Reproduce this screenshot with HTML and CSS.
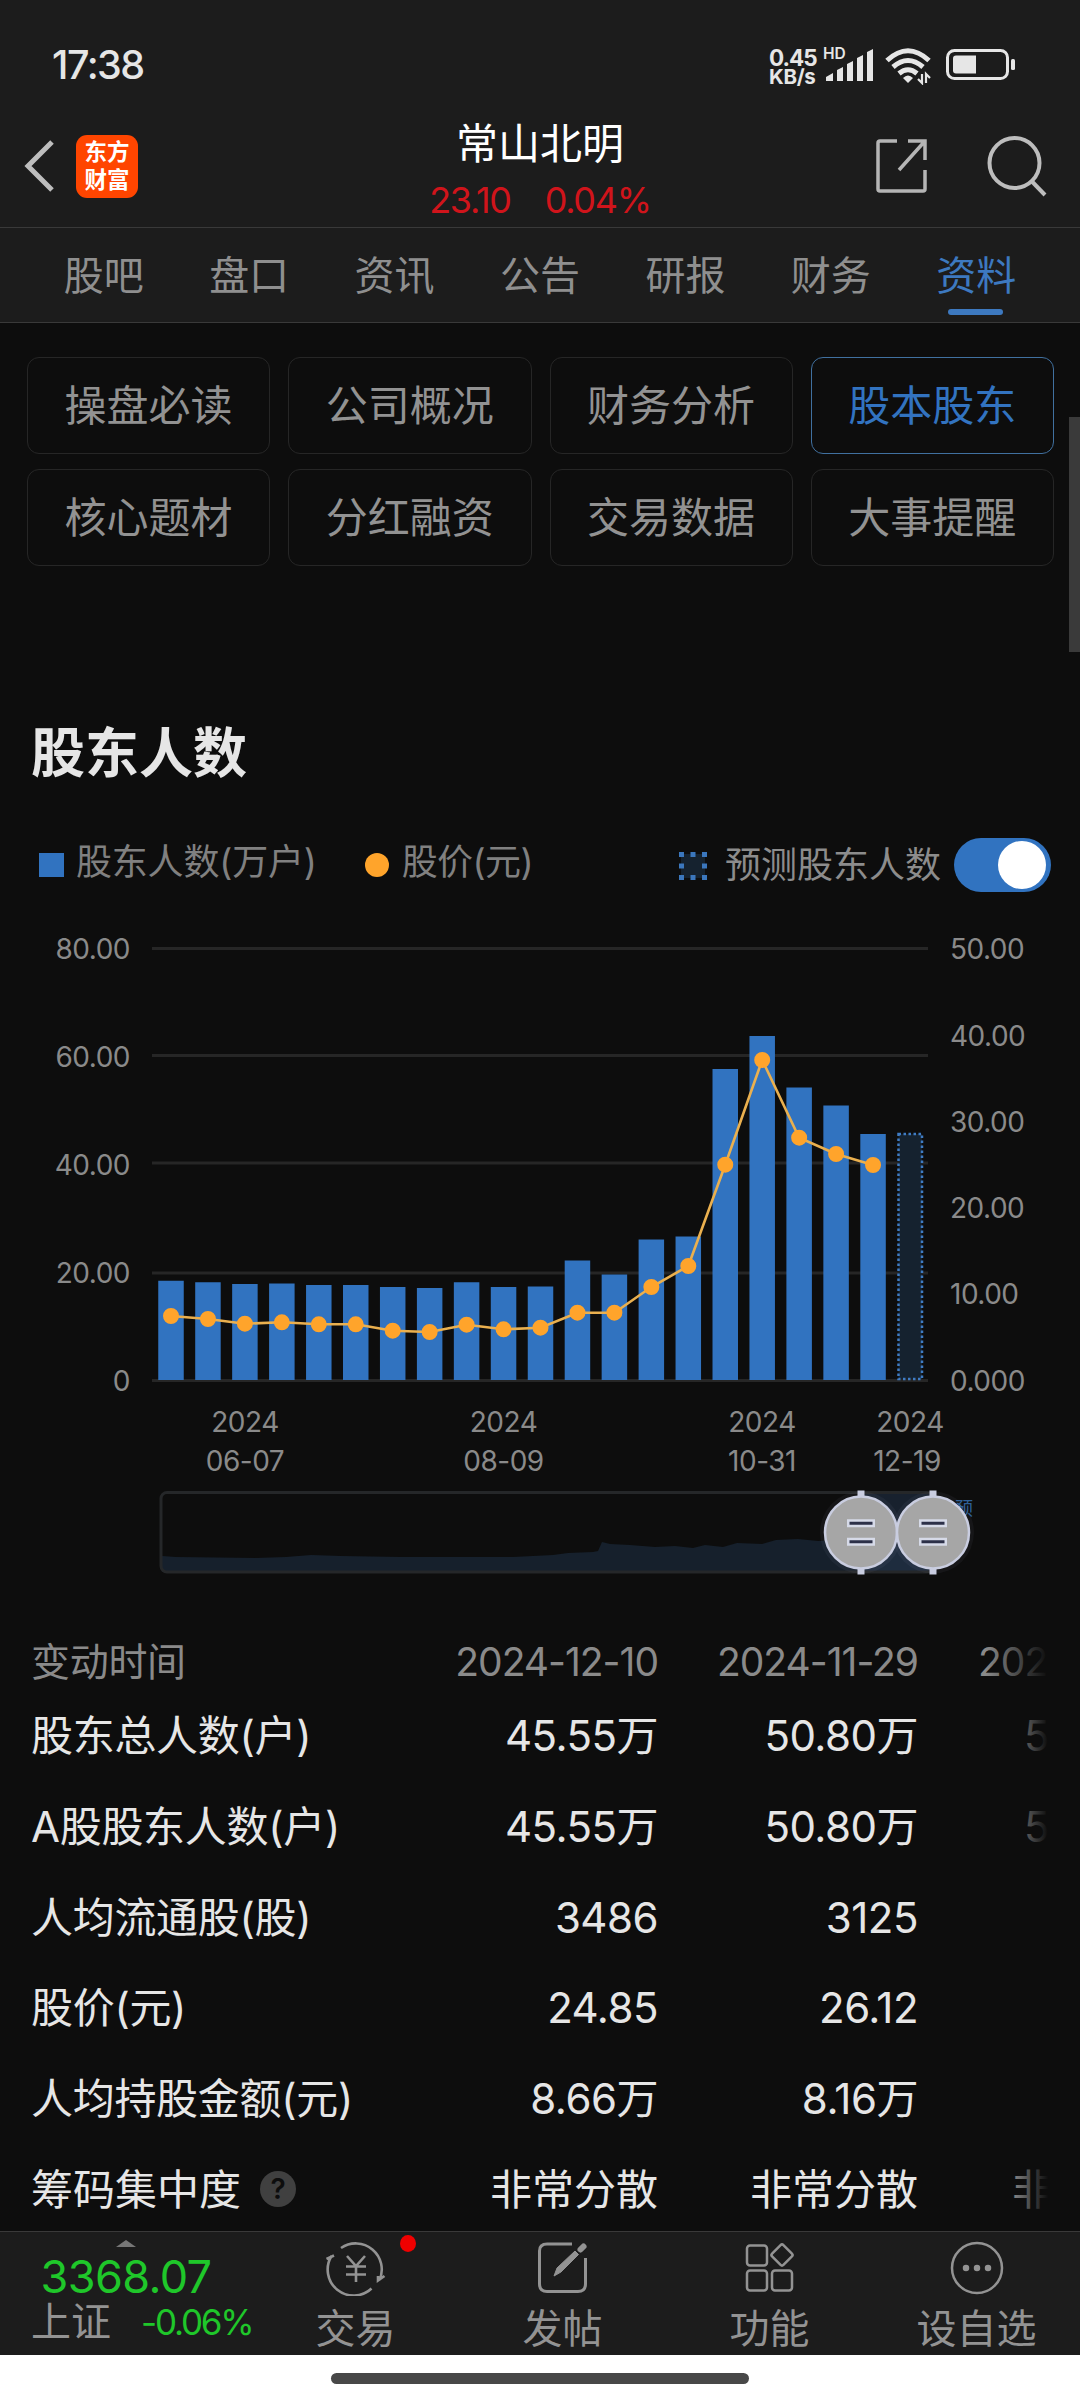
FILE: index.html
```html
<!DOCTYPE html>
<html lang="zh-CN">
<head>
<meta charset="utf-8">
<title>常山北明</title>
<link rel="stylesheet" href="styles.css">
</head>
<body>
<div class="app">
  <div class="status">
    <span class="clock">17:38</span>
    <div class="status-right">
      <div class="speed"><span>0.45</span><span class="unit">KB/s</span></div>
      <svg class="signal" width="54" height="44" viewBox="-2 -4 54 44" fill="#e6e6e6">
        <text x="0" y="14" class="hd">HD</text>
        <path d="M3 36v-4l7-4v8zM14 36V25l6-3v14zM24 36V19l6-3v20zM34 36V13l6-3v26zM44 36V7l6-3v32z"/>
      </svg>
      <svg class="wifi" width="46" height="38" viewBox="0 0 46 38" fill="none" stroke="#e6e6e6" stroke-width="5">
        <path d="M2 13.500Q23-6 44 13.500M8 20Q23 7 38 20M14 26.500Q23 19 32 26.500"/>
        <path d="M23 36l-5-5q5-5 10 0z" fill="#e6e6e6" stroke="none"/>
        <path d="M37 27v9l-4-4M41 36v-9l4 4" stroke-width="2.200"/>
      </svg>
      <svg class="battery" width="69" height="32" viewBox="0 0 69 32">
        <rect x="1.500" y="1.500" width="60" height="28" rx="7" fill="none" stroke="#e6e6e6" stroke-width="3"/>
        <path d="M10 6.500H30V24.500H10Q7 24.500 7 21.500V9.500Q7 6.500 10 6.500z" fill="#e6e6e6"/>
        <rect x="65" y="10" width="4" height="11" rx="1.500" fill="#e6e6e6"/>
      </svg>
    </div>
  </div>

  <header class="header">
    <div class="header-left">
      <svg width="32" height="54" viewBox="0 0 32 54" fill="none" stroke="#bdbdbd" stroke-width="5"><path d="M28 3L4 27l24 24"/></svg>
      <div class="logo"><span>东方</span><span>财富</span></div>
    </div>
    <div class="stock">
      <h1>常山北明</h1>
      <div class="quote"><span>23.10</span><span>0.04%</span></div>
    </div>
    <div class="header-right">
      <svg width="54" height="56" viewBox="0 0 54 56" fill="none" stroke="#b5b5b5" stroke-width="3.500">
        <path d="M22 3H5Q3 3 3 5V51Q3 53 5 53H48Q50 53 50 51V32M33 3H50V22M50 3L24 32"/>
      </svg>
      <svg width="60" height="62" viewBox="0 0 60 62" fill="none" stroke="#bdbdbd" stroke-width="4">
        <circle cx="27.500" cy="28" r="25"/><path d="M44.500 46L58 60"/>
      </svg>
    </div>
  </header>

  <nav class="tabs">
    <span>股吧</span><span>盘口</span><span>资讯</span><span>公告</span><span>研报</span><span>财务</span><span class="active">资料</span>
  </nav>

  <main class="main">
    <div class="scrollbar"></div>
    <div class="chips">
      <span>操盘必读</span><span>公司概况</span><span>财务分析</span><span class="active">股本股东</span>
      <span>核心题材</span><span>分红融资</span><span>交易数据</span><span>大事提醒</span>
    </div>

    <h2>股东人数</h2>

    <div class="legend">
      <i class="square"></i><span class="series">股东人数(万户)</span>
      <i class="dot"></i><span class="series">股价(元)</span>
      <svg class="dotted" width="28" height="28" viewBox="0 0 28 28"><rect x="2" y="2" width="24" height="24" fill="#15222f"/>
        <path d="M0 2.500h28M0 14h28M0 25.500h28" stroke="#3b77bd" stroke-width="5" stroke-dasharray="5 6.500"/>
        <rect x="9" y="9" width="10" height="10" fill="#15222f"/></svg>
      <span class="forecast">预测股东人数</span>
      <span class="toggle"></span>
    </div>

    <svg class="chart" width="1080" height="740" viewBox="0 892 1080 740">
      <path class="grid" d="M152 948.500H928M152 1055.500H928M152 1163H928M152 1273H928M152 1380.500H928"/>
      <g class="axis end">
        <text x="130" y="958.500">80.00</text><text x="130" y="1066.500">60.00</text><text x="130" y="1174.500">40.00</text><text x="130" y="1283">20.00</text><text x="130" y="1391">0</text>
      </g>
      <g class="axis">
        <text x="950" y="958.500">50.00</text><text x="950" y="1045.500">40.00</text><text x="950" y="1131.500">30.00</text><text x="950" y="1218">20.00</text><text x="950" y="1304">10.00</text><text x="950" y="1391">0.000</text>
      </g>
      <path class="bars" d="M171 1380V1280.700M207.950 1380V1282.300M244.900 1380V1284M281.850 1380V1283.500M318.800 1380V1285M355.750 1380V1285M392.700 1380V1287M429.650 1380V1288M466.600 1380V1282.300M503.550 1380V1287M540.500 1380V1286.500M577.450 1380V1260.500M614.400 1380V1274.500M651.350 1380V1239.500M688.300 1380V1236.500M725.250 1380V1069M762.200 1380V1036M799.150 1380V1087.500M836.100 1380V1105.500M873.050 1380V1134"/>
      <rect x="898.500" y="1134" width="23.500" height="245" fill="#15222f" stroke="#3f7cc4" stroke-width="2.500" stroke-dasharray="2.500 2.500"/>
      <polyline class="price" points="171,1316 207.950,1319 244.900,1323.700 281.850,1322.300 318.800,1324.300 355.750,1324.300 392.700,1330.700 429.650,1332 466.600,1324.700 503.550,1329.300 540.500,1327.700 577.450,1312.700 614.400,1312.700 651.350,1287 688.300,1266 725.250,1164.700 762.200,1060 799.150,1137.700 836.100,1154 873.050,1165"/>
      <path class="points" d="M171 1316h0M207.950 1319h0M244.900 1323.700h0M281.850 1322.300h0M318.800 1324.300h0M355.750 1324.300h0M392.700 1330.700h0M429.650 1332h0M466.600 1324.700h0M503.550 1329.300h0M540.500 1327.700h0M577.450 1312.700h0M614.400 1312.700h0M651.350 1287h0M688.300 1266h0M725.250 1164.700h0M762.200 1060h0M799.150 1137.700h0M836.100 1154h0M873.050 1165h0"/>
      <g class="axis mid">
        <text x="245" y="1432">2024</text><text x="245" y="1471">06-07</text>
        <text x="503.500" y="1432">2024</text><text x="503.500" y="1471">08-09</text>
        <text x="762" y="1432">2024</text><text x="762" y="1471">10-31</text>
        <text x="910" y="1432">2024</text><text x="907" y="1471">12-19</text>
      </g>
      <path fill="#16202c" d="M162 1572V1556l14 1 80 1 30-1 25-2 30 1 60 1h112l40-2 15-2 25-1 5-1 4-9 8 2 20 1 25 2 20-1 18 2 12-3 18 2 14-4 25 1 14-4 22-1 20 2 20-1 20-2V1572z"/>
      <rect x="861" y="1493" width="72" height="79" fill="#18212e"/>
      <path d="M861 1545h72v27H861z" fill="#1e2c3e"/>
      <rect x="161" y="1492.500" width="772" height="79.500" rx="6" fill="none" stroke="#252729" stroke-width="3"/>
      <text x="955" y="1515" class="hint">预</text>
      <g class="handle" transform="translate(861 1532.500)"><circle r="41" class="glow"/><path class="stem" d="M0-42V42"/><circle r="36"/><path class="grip" d="M-14-9.300H14M-14 9.300H14"/><path class="groove" d="M-11.500-9.300H11.500M-11.500 9.300H11.500"/></g>
      <g class="handle" transform="translate(933 1532.500)"><circle r="41" class="glow"/><path class="stem" d="M0-42V42"/><circle r="36"/><path class="grip" d="M-14-9.300H14M-14 9.300H14"/><path class="groove" d="M-11.500-9.300H11.500M-11.500 9.300H11.500"/></g>
    </svg>

    <div class="table">
      <div class="row head"><span>变动时间</span><b>2024-12-10</b><b>2024-11-29</b><b class="clip">202</b></div>
      <div class="row"><span>股东总人数(户)</span><b>45.55万</b><b>50.80万</b><b class="clip num">5</b></div>
      <div class="row"><span>A股股东人数(户)</span><b>45.55万</b><b>50.80万</b><b class="clip num">5</b></div>
      <div class="row"><span>人均流通股(股)</span><b>3486</b><b>3125</b></div>
      <div class="row"><span>股价(元)</span><b>24.85</b><b>26.12</b></div>
      <div class="row"><span>人均持股金额(元)</span><b>8.66万</b><b>8.16万</b></div>
      <div class="row"><span class="cjk">筹码集中度<i class="help">?</i></span><b class="cjk">非常分散</b><b class="cjk">非常分散</b><b class="clip word">非</b></div>
    </div>
  </main>

  <footer class="footer">
    <div class="index">
      <svg width="20" height="7" viewBox="0 0 20 7"><path d="M0 7L10 0l10 7z" fill="#777"/></svg>
      <strong>3368.07</strong>
      <div class="index-row"><span>上证</span><em>-0.06%</em></div>
    </div>
    <div class="item">
      <svg width="62" height="56" viewBox="0 0 62 56" fill="none" stroke="#939393" stroke-width="2.600">
        <path d="M16 8A26 26 0 0 1 54.500 40M46.500 48.500A26 26 0 0 1 6.500 16M1.500 19L9 15.500M59.500 36l-6.500 4.500V36"/>
        <path d="M22 16l9 10 9-10M31 26V42M21 26.500H41M21 34.500H41"/>
      </svg>
      <span>交易</span><i class="badge"></i>
    </div>
    <div class="item">
      <svg width="56" height="56" viewBox="0 0 56 56" fill="none" stroke="#939393" stroke-width="3">
        <path d="M37 4H12Q4.500 4 4.500 11V44Q4.500 51.500 12 51.500H43Q50.500 51.500 50.500 44V18"/>
        <path d="M19 36l3-8L40 11l3.500 3.500L26 32z" fill="#939393" stroke-width="1"/><path d="M45.500 9.500L48.500 6.500" stroke-width="6" stroke-linecap="round"/>
      </svg>
      <span>发帖</span>
    </div>
    <div class="item">
      <svg width="56" height="56" viewBox="0 0 56 56" fill="none" stroke="#939393" stroke-width="2.500">
        <rect x="5" y="5.500" width="20" height="20" rx="3"/><rect x="5" y="30.500" width="20" height="20" rx="3"/><rect x="30" y="30.500" width="20" height="20" rx="3"/><rect x="32" y="7" width="16" height="16" rx="2" transform="rotate(45 40 15)"/>
      </svg>
      <span>功能</span>
    </div>
    <div class="item">
      <svg width="56" height="56" viewBox="0 0 56 56" fill="none" stroke="#939393" stroke-width="2.500">
        <circle cx="28" cy="28" r="25"/><path d="M17 28h0M28 28h0M39 28h0" stroke-width="6.500" stroke-linecap="round"/>
      </svg>
      <span>设自选</span>
    </div>
  </footer>
  <div class="home"><i></i></div>
</div>
</body>
</html>
```
FILE: styles.css
```css
* { box-sizing: border-box; }
body {
  margin: 0;
  background: #0d0d0d;
  color: #e6e6e6;
  font-family: Inter, "Noto Sans CJK SC", sans-serif;
}
h1, h2 { margin: 0; }
i, em { font-style: normal; }
svg { display: block; flex: none; }
.app { width: 1080px; height: 2400px; overflow: hidden; display: flex; flex-direction: column; }

.status { height: 100px; background: #1c1c1c; display: flex; justify-content: space-between; padding: 29px 65px 0 52px; flex: none; }
.clock { font-size: 39.500px; line-height: 72px; font-weight: 500; letter-spacing: -1.500px; }
.status-right { display: flex; align-items: flex-start; padding-top: 18px; }
.speed { display: flex; flex-direction: column; font-size: 22.500px; line-height: 19px; font-weight: 700; width: 54px; margin-top: 1px; letter-spacing: -1px; }
.speed .unit { font-size: 20.500px; letter-spacing: -0.3px; }
.hd { font-size: 15.500px; font-weight: 600; }
.signal { margin: -6px 0 0 -2px; }
.wifi { margin: 0 0 0 10px; }
.battery { margin: 2px 0 0 15px; }

.header { height: 128px; background: #1c1c1c; border-bottom: 1px solid #393939; display: flex; justify-content: space-between; flex: none; }
.header-left { display: flex; align-items: center; padding-left: 24px; width: 300px; height: 132px; }
.logo { width: 62px; height: 63px; margin-left: 20px; border-radius: 11px; background: #ff4500; color: #fff; font-weight: 700; font-size: 22.500px; line-height: 28px; display: flex; flex-direction: column; align-items: center; justify-content: center; }
.stock { text-align: center; padding-top: 15px; }
.stock h1 { font-size: 42px; line-height: 58px; font-weight: 400; color: #fff; }
.quote { display: flex; gap: 34px; justify-content: center; font-size: 36px; line-height: 54px; color: #d0141b; }
.quote span { letter-spacing: -1.300px; }
.header-right { width: 300px; display: flex; align-items: center; justify-content: flex-end; gap: 58px; padding-right: 33px; height: 132px; }

.tabs { height: 95px; background: #1c1c1c; border-bottom: 1px solid #393939; display: flex; padding: 0 31px; flex: none; color: #8f8f8f; font-size: 40px; line-height: 96px; text-align: center; }
.tabs span { flex: 1; position: relative; }
.tabs .active { color: #3d79c0; }
.tabs .active::after { content: ""; position: absolute; left: 50%; margin-left: -28px; top: 81px; width: 55px; height: 6px; border-radius: 3px; background: #3d79c0; }

.main { height: 1908px; flex: none; overflow: hidden; position: relative; padding-top: 34px; }
.scrollbar { position: absolute; right: 0; top: 94px; width: 11px; height: 235px; background: #3a3a3a; }
.chips { display: grid; grid-template-columns: repeat(4, 1fr); gap: 15px 18px; padding: 0 26px 0 27px; }
.chips span { height: 97px; border: 1.500px solid #262626; border-radius: 12px; font-size: 42px; line-height: 96px; text-align: center; color: #929292; }
.chips .active { color: #3273c0; border-color: #40709f; }
h2 { margin: 152px 0 48px 31px; font-size: 54px; line-height: 72px; font-weight: 700; }

.legend { height: 54px; display: flex; align-items: center; padding: 0 29px 0 39px; color: #808080; font-size: 36px; line-height: 54px; }
.square { width: 25px; height: 24px; background: #3173c0; margin-right: 12px; }
.series { margin-top: -7px; letter-spacing: -0.2px; }
.dot { width: 24px; height: 24px; border-radius: 50%; background: #ffa42b; margin: 0 13px 0 48px; }
.series:nth-of-type(2) { letter-spacing: -0.6px; }
.dotted { margin: 2px 18px 0 auto; }
.forecast { color: #8c8c8c; margin-right: 13px; }
.toggle { width: 97px; height: 54px; border-radius: 27px; background: #3173c0; padding: 3px 5px; display: flex; justify-content: flex-end; }
.toggle::after { content: ""; width: 48px; height: 48px; border-radius: 50%; background: #fff; }

.grid { stroke: #262626; stroke-width: 3; }
.axis { font-size: 28px; fill: #8a8a8a; letter-spacing: -0.5px; }
.end { text-anchor: end; }
.mid { text-anchor: middle; }
.bars { stroke: #3173c0; stroke-width: 25.500; }
.price { fill: none; stroke: #eab04f; stroke-width: 2.600; }
.points { fill: none; stroke: #ffa42b; stroke-width: 16; stroke-linecap: round; }
.hint { font-size: 18px; fill: #2f6097; }
.handle circle { fill: #a6a6a6; stroke: #c9cde0; stroke-width: 2.500; }
.handle .glow { fill: rgba(190, 205, 230, 0.05); stroke: none; }
.stem { stroke: #c9cde0; stroke-width: 7; }
.grip { stroke: #d6dae8; stroke-width: 8; }
.groove { stroke: #2c3048; stroke-width: 3; }

.table { position: relative; overflow: hidden; width: 1080px; padding-top: 1px; }
.table::after { content: ""; position: absolute; left: 985px; right: 0; top: 0; bottom: 0; background: linear-gradient(90deg, rgba(13, 13, 13, 0), #0d0d0d 63px); }
.row { display: grid; grid-template-columns: 367px 260px 260px 1fr; padding-left: 31px; height: 90.800px; font-size: 42px; line-height: 89px; white-space: nowrap; }
.row b { font-weight: 400; text-align: right; letter-spacing: -0.5px; }
.row .cjk { letter-spacing: 0; }
.row .clip { text-align: left; padding-left: 60px; }
.row .num { padding-left: 106px; }
.row .word { padding-left: 94px; }
.row span { display: flex; align-items: center; letter-spacing: -0.3px; height: 89px; }
.row.head { height: 58px; font-size: 39px; line-height: 58px; color: #8a8a8a; }
.row.head span { height: 58px; }
.row.head b { letter-spacing: -1px; }
.help { width: 36px; height: 36px; margin-left: 19px; border-radius: 50%; background: #404040; color: #0d0d0d; font-size: 28px; line-height: 36px; font-weight: 600; text-align: center; }

.footer { height: 124px; flex: none; background: #1c1c1c; border-top: 1px solid #393939; display: grid; grid-template-columns: 252px repeat(4, 207px); color: #939393; font-size: 40px; }
.index { display: flex; flex-direction: column; align-items: center; padding-top: 8px; white-space: nowrap; }
.index strong { font-weight: 400; font-size: 45px; line-height: 52px; color: #1fc72a; margin-top: 4px; letter-spacing: -0.6px; }
.index-row { display: flex; align-items: center; width: 252px; padding-left: 31px; gap: 30px; line-height: 38px; }
.index-row em { font-size: 35px; color: #1fc72a; letter-spacing: -2.200px; }
.item { display: flex; flex-direction: column; align-items: center; padding-top: 8px; position: relative; }
.item span { line-height: 60px; margin-top: 3px; }
.badge { position: absolute; left: 148px; top: 3px; width: 16px; height: 17px; border-radius: 50%; background: #f00000; }
.home { height: 45px; flex: none; background: #fff; display: flex; justify-content: center; padding-top: 18px; }
.home i { width: 418px; height: 11px; border-radius: 6px; background: #484848; }
```
